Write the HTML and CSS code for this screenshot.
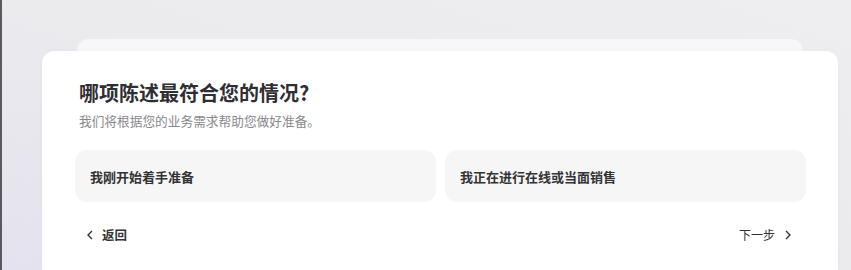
FILE: index.html
```html
<!DOCTYPE html>
<html lang="zh-CN">
<head>
  <meta charset="UTF-8">
  <meta name="viewport" content="width=device-width, initial-scale=1.0">
  <title>业务情况</title>
  <link rel="stylesheet" href="styles.css">
</head>
<body>
<div class="stage">
  <div class="card-back"></div>
  <div class="card">
    <h1 class="title">哪项陈述最符合您的情况?</h1>
    <p class="subtitle">我们将根据您的业务需求帮助您做好准备。</p>

    <div class="options">
      <a href="#" class="option">我刚开始着手准备</a>
      <a href="#" class="option">我正在进行在线或当面销售</a>
    </div>

    <div class="nav">
      <a href="#" class="nav-link back">
        <svg width="8" height="10" viewBox="0 0 8 10"><polyline points="6,1 2,5 6,9" fill="none" stroke="#333" stroke-width="1.4"/></svg>
        返回
      </a>
      <a href="#" class="nav-link next">
        下一步
        <svg width="8" height="10" viewBox="0 0 8 10"><polyline points="2,1 6,5 2,9" fill="none" stroke="#333" stroke-width="1.4"/></svg>
      </a>
    </div>
  </div>
</div>
</body>
</html>
```

FILE: styles.css
```css
body {
  margin: 0;
  height: 270px;
  overflow: hidden;
  font-family: 'Noto Sans CJK SC', 'Noto Sans', sans-serif;
  background: linear-gradient(to bottom left, #eeeef0 0%, #ebebee 50%, #e4e2ee 100%);
  border-left: 2px solid #5a5a5e;
}

.stage {
  padding: 39px 13px 0 40px;
}

.card-back {
  height: 12px;
  margin: 0 35px;
  background-color: #f7f7f8;
  border-radius: 12px 12px 0 0;
}

.card {
  height: 219px;
  box-sizing: border-box;
  background-color: #fff;
  border-radius: 12px 12px 0 0;
  padding: 28px 32px 0 33px;
  box-shadow: 0 0 6px rgba(0, 0, 0, 0.03);
}

.title {
  margin: 0 0 5px 4px;
  font-size: 20px;
  line-height: 28px;
  font-weight: bold;
  color: #2f2f33;
}

.subtitle {
  margin: 0 0 20px 4px;
  font-size: 12.7px;
  line-height: 18px;
  color: #88888c;
}

.options {
  display: grid;
  grid-template-columns: 1fr 1fr;
  gap: 9px;
}

.option {
  display: flex;
  align-items: center;
  height: 52px;
  padding: 1px 15px 0;
  box-sizing: border-box;
  background-color: #f6f6f7;
  border-radius: 12px;
  text-decoration: none;
  font-size: 13px;
  font-weight: bold;
  color: #333;
}

.nav {
  display: flex;
  justify-content: space-between;
  margin-top: 23px;
  padding: 0 14px 0 11px;
}

.nav-link {
  display: flex;
  align-items: center;
  gap: 8px;
  line-height: 20px;
  text-decoration: none;
  font-size: 12.5px;
  font-weight: bold;
  color: #333;
}

.next {
  gap: 9px;
  font-size: 12px;
  font-weight: normal;
}
```
